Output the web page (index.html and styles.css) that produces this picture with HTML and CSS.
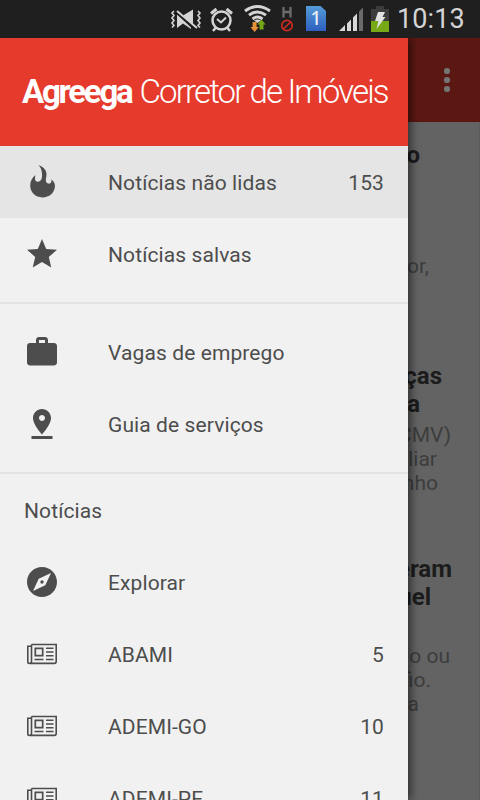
FILE: index.html
```html
<!DOCTYPE html>
<html lang="pt-BR">
<head>
<meta charset="utf-8">
<title>Agreega Corretor de Imóveis</title>
<link rel="stylesheet" href="styles.css">
</head>

<body>
	<svg class="defs">
		<symbol id="news" viewBox="0 0 36 36">
			<path d="M7.500 8.500H32.200V25.500q0 1.900-1.800 1.900H5.500q-1.700 0-1.700-1.700V10.300H7.500M7.500 8.500V25.500q0 1.700-1.700 1.700" fill="none" stroke="#4d4d4d" stroke-width="1.600"/>
			<path d="M11.300 12.300h7.400v7.400h-7.400z" fill="none" stroke="#4d4d4d" stroke-width="1.700"/>
			<path d="M22 12.300h7.500M22 16h7.500M22 19.700h7.500M22 23.500h7.500M10.500 23.500h9" stroke="#4d4d4d" stroke-width="1.600"/>
		</symbol>
	</svg>

	<div class="status">
		<svg class="status-icons" width="224" height="38" viewBox="168 0 224 38">
			<!-- vibrate -->
			<path d="M174 11l-2 2 2 2.500-2 2.500 2 2.500-2 2.500 2 2.500-2 2M198 11l2 2-2 2.500 2 2.500-2 2.500 2 2.500-2 2.500 2 2" fill="none" stroke="#d4d4d4" stroke-width="1.600"/>
			<path d="M177 14l14 13.500v1.500l-8-5.500-6 4.500zM183 15.500l10-6v15z" fill="#d4d4d4"/>
			<path d="M175 12l21 18" stroke="#1f1f1f" stroke-width="1.500"/>
			<path d="M177 11l20 17" stroke="#d4d4d4" stroke-width="1.900"/>
			<!-- alarm -->
			<g fill="none" stroke="#d4d4d4" stroke-width="2.500">
				<circle cx="221.500" cy="20.500" r="9"/>
				<path d="M217 19l4 3.500 5-5" stroke-width="2"/>
				<path d="M211 13.500l5.500-4.500M232 13.500l-5.500-4.500" stroke-width="3"/>
				<path d="M215.500 28l-2.500 3M227.500 28l2.500 3"/>
			</g>
			<!-- wifi -->
			<g fill="none" stroke="#d4d4d4" stroke-width="2.900">
				<path d="M245 11q12.500-9 25 0"/>
				<path d="M249 15.200q8.500-6.500 17 0"/>
				<path d="M252.500 19q5-4 10 0"/>
			</g>
			<path d="M254 20.500q3.500-2 7 0l-3.500 2.500z" fill="#d4d4d4"/>
			<path d="M252.600 22h4v5h2.200l-4.200 5-4.200-5h2.200z" fill="#e59138"/>
			<path d="M259.500 29.500v-5h-2.200l4.200-5 4.200 5h-2.200v5z" fill="#72a616"/>
			<!-- network type -->
			<path d="M283.500 7v10.500M290.500 7v10.500M283.500 12H290.500" stroke="#6c6c6c" stroke-width="2.300"/>
			<circle cx="287" cy="25.500" r="5.200" fill="none" stroke="#ca2b20" stroke-width="1.700"/>
			<path d="M283.500 29l7-7" stroke="#ca2b20" stroke-width="1.700"/>
			<!-- sim card -->
			<linearGradient id="sim" x2="0" y2="1"><stop stop-color="#559bd7"/><stop offset="1" stop-color="#2d5fc0"/></linearGradient>
			<path d="M306 6h14.500l5.500 5v20h-20z" fill="url(#sim)"/>
			<text x="316" y="25" class="sim-no">1</text>
			<!-- signal -->
			<path d="M339 31l6-6v6zM347 23.500l4-4V31h-4zM353 17.500l4-4V31h-4z" fill="#d8d8d8"/>
			<path d="M359 11.500l4-4V31h-4z" fill="#6b6b6b"/>
			<!-- battery -->
			<path d="M371 9h5V6h8v3h5v12h-18z" fill="#3c3c3c"/>
			<path d="M371 21h18v11h-18z" fill="#77a815"/>
			<path d="M378 12h7l-2.500 5h3L376.500 29l2-8H375z" fill="#e2e2e2"/>
		</svg>
		<span class="clock">10:13</span>
	</div>

	<div class="page">
		<div class="toolbar">
			<svg width="8" height="26" viewBox="0 0 8 26" fill="#747474"><circle cx="4" cy="4" r="3.100"/><circle cx="4" cy="13" r="3.100"/><circle cx="4" cy="22" r="3.100"/></svg>
		</div>
		<div class="feed">
			<div class="post first">
				<p class="title end-o">o</p>
				<p class="text end-or">or,</p>
			</div>
			<div class="post second">
				<p class="title end-cas">ças</p>
				<p class="title end-a">a</p>
				<p class="text lead end-cmv">(CMV)</p>
				<p class="text end-liar">liar</p>
				<p class="text end-nho">nho</p>
			</div>
			<div class="post third">
				<p class="title end-eram">eram</p>
				<p class="title end-uel">uel</p>
				<p class="text gap end-ou">o ou</p>
				<p class="text end-io">fio.</p>
				<p class="text end-la">a</p>
			</div>
		</div>
	</div>

	<div class="drawer">
		<div class="brand"><b>Agreega</b><span>Corretor de Imóveis</span></div>
		<div class="item active">
			<svg class="icon" viewBox="0 0 36 36"><path d="M14.500 0.900C20.500 3 23.500 7.500 22.300 12.500C21.300 16.500 21.800 19 24 19.600C26.500 20.200 28 18.200 27.400 15.300C30 17.500 31.300 20 30.900 22.800C30.300 29.200 25.300 33.400 18.500 33.400C11.500 33.400 6.200 28.300 6.200 21.800C6.200 17 8.300 13.500 11.600 11.100C10.400 14.800 11 17.600 13.500 17.800C17.100 18.100 18.600 14.300 17.900 8.800C17.600 5.500 16.500 3 14.500 0.900Z"/></svg>
			<span class="label">Notícias não lidas</span><span class="count">153</span>
		</div>
		<div class="item">
			<svg class="icon" viewBox="0 0 24 24"><path d="M12 17.270L18.180 21l-1.640-7.030L22 9.240l-7.190-.61L12 2 9.190 8.630 2 9.240l5.460 4.730L5.820 21z"/></svg>
			<span class="label">Notícias salvas</span>
		</div>
		<div class="divider"></div>
		<div class="item">
			<svg class="icon" viewBox="0 0 24 24"><path d="M20 6h-4V4c0-1.110-.89-2-2-2h-4c-1.110 0-2 .89-2 2v2H4c-1.110 0-2 .89-2 2v11c0 1.110.89 2 2 2h16c1.110 0 2-.89 2-2V8c0-1.110-.89-2-2-2zm-6 0h-4V4h4v2z"/></svg>
			<span class="label">Vagas de emprego</span>
		</div>
		<div class="item">
			<svg class="icon" viewBox="0 0 24 24"><path d="M18 8c0-3.310-2.690-6-6-6S6 4.690 6 8c0 4.500 6 11 6 11s6-6.500 6-11zm-8 0c0-1.100.9-2 2-2s2 .9 2 2-.89 2-2 2c-1.100 0-2-.9-2-2zM5 20v2h14v-2H5z"/></svg>
			<span class="label">Guia de serviços</span>
		</div>
		<div class="divider last"></div>
		<div class="subheader">Notícias</div>
		<div class="item">
			<svg class="icon" viewBox="0 0 24 24"><path d="M12 10.900c-.61 0-1.100.49-1.100 1.100s.49 1.100 1.100 1.100c.61 0 1.100-.49 1.100-1.100s-.49-1.100-1.100-1.100zM12 2C6.480 2 2 6.480 2 12s4.480 10 10 10 10-4.480 10-10S17.520 2 12 2zm2.190 12.190L6 18l3.810-8.190L18 6l-3.810 8.190z"/></svg>
			<span class="label">Explorar</span>
		</div>
		<div class="item">
			<svg class="icon"><use href="#news"/></svg>
			<span class="label">ABAMI</span><span class="count">5</span>
		</div>
		<div class="item">
			<svg class="icon"><use href="#news"/></svg>
			<span class="label">ADEMI-GO</span><span class="count">10</span>
		</div>
		<div class="item">
			<svg class="icon"><use href="#news"/></svg>
			<span class="label">ADEMI-PE</span><span class="count">11</span>
		</div>
	</div>
</body>
</html>
```

FILE: styles.css
```css
* {
	box-sizing: border-box;
}

body {
	margin: 0;
	position: relative;
	width: 480px;
	height: 800px;
	overflow: hidden;
	background: #636363;
	font-family: Roboto, sans-serif;
	color: #4d4d4d;
}

.defs {
	display: none;
}

.status {
	display: flex;
	justify-content: flex-end;
	align-items: center;
	height: 38px;
	padding-right: 15px;
	background: #1f1f1f;
}

.clock {
	width: 68px;
	margin-left: 5px;
	font-size: 27px;
	line-height: 38px;
	letter-spacing: 0.1px;
	color: #d4d4d4;
	white-space: nowrap;
}

.sim-no {
	font-family: "Noto Sans", sans-serif;
	font-size: 19px;
	font-weight: 500;
	text-anchor: middle;
	fill: #e8edf5;
}

/* page behind the drawer */
.toolbar {
	display: flex;
	justify-content: flex-end;
	align-items: center;
	height: 84px;
	padding-right: 29px;
	background: #5b1813;
}

.feed {
	height: 678px;
	border-right: 1px solid #5c5c5c;
}

.post p {
	margin: 0;
	text-align: right;
}

.title {
	font-size: 24px;
	font-weight: bold;
	line-height: 28px;
	color: #1c1c1c;
}

.text {
	font-size: 21px;
	line-height: 24px;
	color: #3d3d3d;
}

.first {
	height: 240px;
	padding-top: 19px;
}

.first .text {
	padding-top: 85px;
}

.second {
	height: 193px;
}

.lead {
	padding-top: 5px;
}

.gap {
	padding-top: 33px;
}

.end-o { padding-right: 59px; }
.end-or { padding-right: 50px; }
.end-cas { padding-right: 37px; }
.end-a { padding-right: 59px; }
.end-cmv { padding-right: 28px; }
.end-liar { padding-right: 42px; }
.end-nho { padding-right: 41px; }
.end-eram { padding-right: 27px; }
.end-uel { padding-right: 48px; }
.end-ou { padding-right: 29px; }
.end-io { padding-right: 48px; }
.end-la { padding-right: 60px; }

.drawer {
	position: absolute;
	left: 0;
	top: 38px;
	width: 408px;
	height: 762px;
	background: #f1f1f1;
	box-shadow: 2px 0 9px rgba(0, 0, 0, 0.6);
	clip-path: inset(0 -16px 0 0);
}

.brand {
	display: flex;
	gap: 8px;
	height: 108px;
	padding-left: 22px;
	background: #e53a2c;
	color: #fff;
	font-size: 33px;
	line-height: 107px;
	white-space: nowrap;
}

.brand b {
	letter-spacing: -2.2px;
}

.brand span {
	font-weight: 300;
	letter-spacing: -1.87px;
}

.item {
	display: flex;
	align-items: center;
	height: 72px;
	padding: 0 24px;
}

.active {
	background: #e5e5e5;
}

.icon {
	width: 36px;
	height: 36px;
	margin-right: 48px;
	fill: #4d4d4d;
}

.label {
	flex: 1;
}

.label, .count, .subheader {
	padding-top: 1px;
	font-size: 21px;
	letter-spacing: 0.1px;
}

.divider {
	height: 2px;
	margin: 12px 0;
	background: #e3e3e3;
}

.last {
	margin-bottom: 0;
}

.subheader {
	height: 72px;
	padding-left: 24px;
	line-height: 72px;
}
```
